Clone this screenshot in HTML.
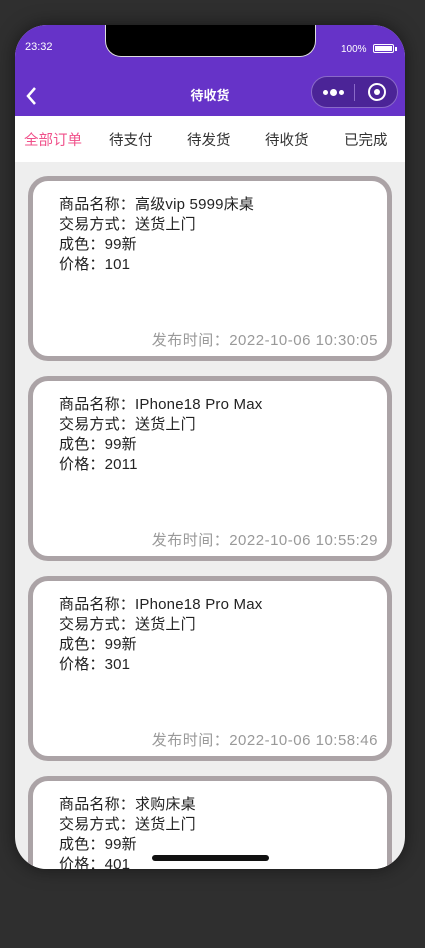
<!DOCTYPE html><html><head><meta charset="utf-8"><style>
*{margin:0;padding:0;box-sizing:border-box}
body{width:425px;height:948px;background:#2f2f2f;font-family:"Liberation Sans","Noto Sans CJK SC",sans-serif;position:relative;overflow:hidden}
.ph{position:absolute;left:15px;top:25px;width:390px;height:844px;border-radius:32px;overflow:hidden;background:#eeeeee;box-shadow:0 0 18px rgba(0,0,0,.5)}
.top{position:absolute;left:0;top:0;width:390px;height:91px;background:#6633c8;color:#fff}
.notch{position:absolute;left:90px;top:0;width:211px;height:32px;background:#000;border-radius:0 0 16px 16px;border:1px solid #ddd;border-top:none}
.tabs{position:absolute;top:91px;left:0;width:390px;height:46px;background:#fff;font-size:14.5px;color:#333}
.tabs span{position:absolute;top:13px}
.card{position:absolute;left:13px;width:364px;height:185px;border:5px solid #aba3a6;border-radius:20px;background:#fff;font-size:15px;color:#222;line-height:20px}
.card .t{position:absolute;left:26px;top:14px;letter-spacing:0.2px}
.card .d{position:absolute;right:9px;top:150px;color:#999;letter-spacing:0.5px}
</style></head><body>
<div class="ph">
<div class="top">
<div class="notch"></div>
<div style="position:absolute;left:10px;top:16px;font-size:11px">23:32</div>
<div style="position:absolute;left:326px;top:19px;font-size:10px">100%</div>
<div style="position:absolute;left:358px;top:19px;width:21px;height:9px;border:1.5px solid #fff;border-radius:2px;padding:1px"><div style="background:#fff;width:100%;height:100%"></div></div>
<div style="position:absolute;left:380px;top:22px;width:2px;height:4px;background:#fff"></div>
<svg style="position:absolute;left:10px;top:61px" width="14" height="20"><path d="M10 2 L3 10 L10 18" stroke="#fff" stroke-width="2.5" fill="none"/></svg>
<div style="position:absolute;left:0;width:390px;top:60px;text-align:center;font-size:13px;font-weight:bold">待收货</div>
<div style="position:absolute;left:296px;top:51px;width:87px;height:32px;border-radius:16px;background:#4b2497;border:1px solid #8a6ac8">
<div style="position:absolute;left:11px;top:13px;width:5px;height:5px;border-radius:50%;background:#fff"></div>
<div style="position:absolute;left:18px;top:12px;width:7px;height:7px;border-radius:50%;background:#fff"></div>
<div style="position:absolute;left:27px;top:13px;width:5px;height:5px;border-radius:50%;background:#fff"></div>
<div style="position:absolute;left:42px;top:7px;width:1px;height:17px;background:#8a6ac8"></div>
<div style="position:absolute;left:56px;top:6px;width:18px;height:18px;border-radius:50%;border:2.5px solid #fff"></div>
<div style="position:absolute;left:62px;top:12px;width:6px;height:6px;border-radius:50%;background:#fff"></div>
</div>
</div>
<div class="tabs"><span style="left:9px;color:#f0508a">全部订单</span><span style="left:94px">待支付</span><span style="left:172px">待发货</span><span style="left:250px">待收货</span><span style="left:329px">已完成</span></div>
<div class="card" style="top:151px"><div class="t">商品名称：高级vip 5999床桌<br>交易方式：送货上门<br>成色：99新<br>价格：101</div><div class="d">发布时间：2022-10-06 10:30:05</div></div>
<div class="card" style="top:351px"><div class="t">商品名称：IPhone18 Pro Max<br>交易方式：送货上门<br>成色：99新<br>价格：2011</div><div class="d">发布时间：2022-10-06 10:55:29</div></div>
<div class="card" style="top:551px"><div class="t">商品名称：IPhone18 Pro Max<br>交易方式：送货上门<br>成色：99新<br>价格：301</div><div class="d">发布时间：2022-10-06 10:58:46</div></div>
<div class="card" style="top:751px"><div class="t">商品名称：求购床桌<br>交易方式：送货上门<br>成色：99新<br>价格：401</div></div>
<div style="position:absolute;left:137px;top:830px;width:117px;height:6px;border-radius:3px;background:#111"></div>
</div>
</body></html>
